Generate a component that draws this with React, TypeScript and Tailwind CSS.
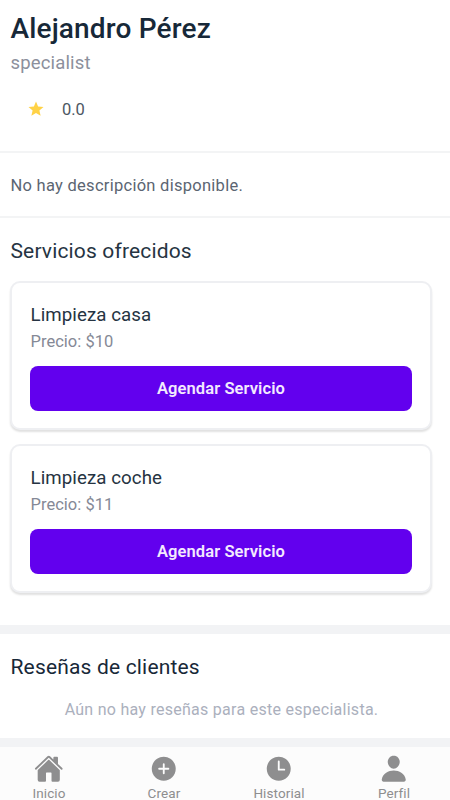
import type { FC } from "react";
import type { IconType } from "react-icons";
import { IoAddCircle, IoHome, IoPerson, IoTime } from "react-icons/io5";
import { MdStar } from "react-icons/md";

interface Service {
  name: string;
  price: number;
}

const services: Service[] = [
  { name: "Limpieza casa", price: 10 },
  { name: "Limpieza coche", price: 11 },
];

const tabs: { label: string; Icon: IconType }[] = [
  { label: "Inicio", Icon: IoHome },
  { label: "Crear", Icon: IoAddCircle },
  { label: "Historial", Icon: IoTime },
  { label: "Perfil", Icon: IoPerson },
];

const ServiceCard: FC<{ service: Service }> = ({ service }) => (
  <li className="h-[149px] rounded-[10px] border-2 border-[#eeeff2] bg-white px-[18px] pt-[19px] shadow-[0_2px_2px_rgba(0,0,0,0.12)]">
    <h3 className="pl-[0.5px] text-[18.7px] leading-[26px] tracking-[0.08px] text-[#263442]">
      {service.name}
    </h3>
    <p className="mt-[2px] pl-[0.5px] text-[16.5px] leading-6 tracking-[0.02px] text-[#858996]">
      Precio: ${service.price}
    </p>
    <button className="mt-3 flex h-[45px] w-full items-center justify-center rounded-[8px] bg-[#6200ee] pt-[2px] text-[16.5px] font-semibold tracking-[0.1px] text-[#f3eafe]">
      Agendar Servicio
    </button>
  </li>
);

const BottomTabs: FC = () => (
  <nav className="flex h-[53px] shrink-0 justify-between bg-[#fcfcfc] pt-[7px] pr-[26px] pl-[19px]">
    {tabs.map(({ label, Icon }) => (
      <div
        key={label}
        className="flex w-[60px] flex-col items-center text-[#8e8e8f]"
      >
        <Icon size={29.5} className="shrink-0" />
        <span className="mt-[2.5px] text-[13.5px] leading-[14px] tracking-[0.1px]">
          {label}
        </span>
      </div>
    ))}
  </nav>
);

export default function App() {
  return (
    <div className="flex h-[800px] w-[450px] flex-col overflow-hidden bg-white font-[Roboto,sans-serif]">
      <header className="h-[153px] shrink-0 border-b-2 border-[#f3f4f5] px-[10.5px] pt-[11px]">
        <h1 className="text-[28px] leading-9 font-medium tracking-[0.16px] text-[#172838]">
          Alejandro Pérez
        </h1>
        <p className="mt-[2px] text-[18.5px] leading-7 tracking-[0.15px] text-[#8c909c]">
          specialist
        </p>
        <div className="mt-5 flex items-center pl-[16.5px]">
          <MdStar size={18} className="mb-px text-[#ffd246]" />
          <span className="mt-px ml-[17px] text-[16.5px] leading-6 text-[#4d5763]">
            0.0
          </span>
        </div>
      </header>
      <p className="h-[65px] shrink-0 border-b-2 border-[#f3f4f5] px-[10.5px] pt-[21px] text-[16.5px] leading-6 tracking-[0.27px] text-[#5b6572]">
        No hay descripción disponible.
      </p>
      <section className="h-[407px] shrink-0 px-[10px] pt-[17px]">
        <h2 className="pl-[0.5px] text-[21px] leading-8 tracking-[0.15px] text-[#263442]">
          Servicios ofrecidos
        </h2>
        <ul className="mt-[14px] mr-2 flex flex-col gap-[14px]">
          {services.map((service) => (
            <ServiceCard key={service.name} service={service} />
          ))}
        </ul>
      </section>
      <section className="h-[122px] shrink-0 border-y-[9px] border-[#f2f3f5] px-[10px] pt-[17px]">
        <h2 className="pl-[0.5px] text-[21px] leading-8 tracking-[0.17px] text-[#172838]">
          Reseñas de clientes
        </h2>
        <p className="mt-[15px] pr-[7px] text-center text-[16px] leading-6 tracking-[0.27px] text-[#abb0bd]">
          Aún no hay reseñas para este especialista.
        </p>
      </section>
      <BottomTabs />
    </div>
  );
}
